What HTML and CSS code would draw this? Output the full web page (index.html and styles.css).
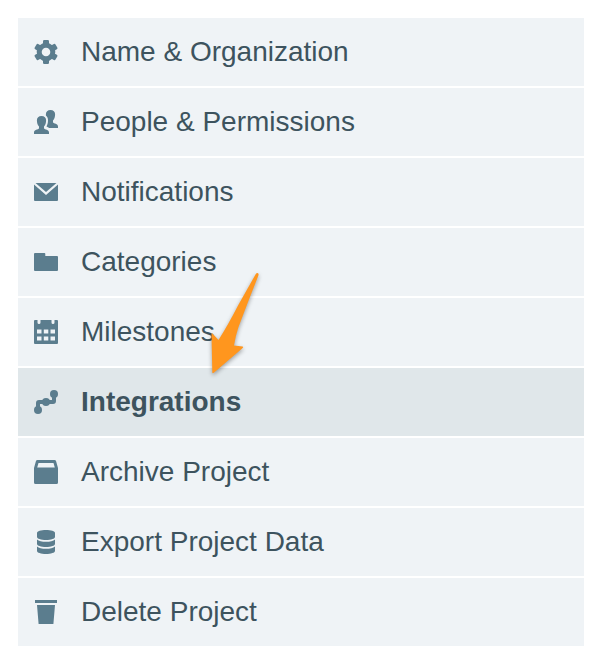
FILE: index.html
```html
<!DOCTYPE html>
<html lang="en">
<head>
    <meta charset="UTF-8">
    <meta name="viewport" content="width=device-width, initial-scale=1.0">
    <title>Project Settings</title>
    <link rel="stylesheet" href="styles.css">
</head>
<body>
    <nav class="settings-menu">
        <a href="#" class="menu-item">
            <svg class="icon" viewBox="0 0 24 24" aria-hidden="true">
                <circle class="ring" cx="12" cy="12" r="6.800"/>
                <rect x="9" y="0" width="6" height="5" rx="1.200"/>
                <rect x="9" y="0" width="6" height="5" rx="1.200" transform="rotate(60 12 12)"/>
                <rect x="9" y="0" width="6" height="5" rx="1.200" transform="rotate(120 12 12)"/>
                <rect x="9" y="0" width="6" height="5" rx="1.200" transform="rotate(180 12 12)"/>
                <rect x="9" y="0" width="6" height="5" rx="1.200" transform="rotate(240 12 12)"/>
                <rect x="9" y="0" width="6" height="5" rx="1.200" transform="rotate(300 12 12)"/>
            </svg>
            <span>Name &amp; Organization</span>
        </a>
        <a href="#" class="menu-item">
            <svg class="icon" viewBox="0 0 24 24" aria-hidden="true">
                <path d="M7.500 6c2.900 0 4.600 1.700 4.600 4.200 0 2.600-.6 4.800-2.100 6.200v2.100c.8 1 5 1.200 5 4V24H0v-1.500c0-2.800 4.200-3 5-4v-2.100c-1.500-1.400-2.100-3.600-2.100-6.200C2.900 7.700 4.600 6 7.500 6z"/>
                <path d="M16.500 0c2.900 0 4.600 1.700 4.600 4.200 0 2.600-.6 4.800-2.100 6.200v2.100c.8 1 5 1.200 5 4V18h-8.800c-.8-.8-1.600-1.200-2.700-1.600 1-1.800 1.500-3.900 1.500-6.200 0-2-.7-3.600-2.100-4.700V4.200C11.900 1.700 13.600 0 16.500 0z"/>
            </svg>
            <span>People &amp; Permissions</span>
        </a>
        <a href="#" class="menu-item">
            <svg class="icon" viewBox="0 0 24 24" aria-hidden="true">
                <path d="M1.500 3h21L12 12z"/>
                <path d="M0 4.500l12 10.500 12-10.500V20q0 1-1 1H1q-1 0-1-1z"/>
            </svg>
            <span>Notifications</span>
        </a>
        <a href="#" class="menu-item">
            <svg class="icon" viewBox="0 0 24 24" aria-hidden="true">
                <path d="M1 3h9.500q.8 0 .8 1v2H23q1 0 1 1v13q0 1-1 1H1q-1 0-1-1V4q0-1 1-1z"/>
            </svg>
            <span>Categories</span>
        </a>
        <a href="#" class="menu-item">
            <svg class="icon" viewBox="0 0 24 24" aria-hidden="true">
                <path fill-rule="evenodd" d="M1 0h2.500v2.500a1.500 1.500 0 0 0 3 0V0h11v2.500a1.500 1.500 0 0 0 3 0V0H23q1 0 1 1v22q0 1-1 1H1q-1 0-1-1V1q0-1 1-1zM3 9.500v4h4.500v-4zM9.800 9.500v4h4.500v-4zM16.500 9.500v4H21v-4zM3 16.500v4h4.500v-4zM9.800 16.500v4h4.500v-4zM16.500 16.500v4H21v-4z"/>
            </svg>
            <span>Milestones</span>
        </a>
        <a href="#" class="menu-item active" aria-current="page">
            <svg class="icon" viewBox="0 0 24 24" aria-hidden="true">
                <path class="wire" d="M4 20v-7q0-1 1-1h14q1 0 1-1V4"/>
                <circle cx="4" cy="20" r="4"/>
                <circle cx="12" cy="12" r="4"/>
                <circle cx="20" cy="4" r="4"/>
            </svg>
            <span>Integrations</span>
        </a>
        <a href="#" class="menu-item">
            <svg class="icon" viewBox="0 0 24 24" aria-hidden="true">
                <path fill-rule="evenodd" d="M3.500 0h17q1.300 0 1.600 1.200L24 8v14.500q0 1.500-1.500 1.500h-21Q0 24 0 22.500V8l1.900-6.800Q2.200 0 3.500 0zM4.500 3L3.200 7.500h17.600L19.500 3z"/>
            </svg>
            <span>Archive Project</span>
        </a>
        <a href="#" class="menu-item">
            <svg class="icon" viewBox="0 0 24 24" aria-hidden="true">
                <path d="M3 3c0-1.800 4-3 9-3s9 1.200 9 3v4c0 1.600-4 3-9 3s-9-1.400-9-3z"/>
                <path d="M3 9.500c1.700 1.600 5 2.300 9 2.300s7.300-.7 9-2.300V14c0 1.600-4 3-9 3s-9-1.400-9-3z"/>
                <path d="M3 16.500c1.700 1.600 5 2.300 9 2.300s7.300-.7 9-2.300V21c0 1.600-4 3-9 3s-9-1.400-9-3z"/>
            </svg>
            <span>Export Project Data</span>
        </a>
        <a href="#" class="menu-item">
            <svg class="icon" viewBox="0 0 24 24" aria-hidden="true">
                <path d="M1 0h22v3H1zM3 5h18l-1.600 19H4.600z"/>
            </svg>
            <span>Delete Project</span>
        </a>

        <svg class="pointer" viewBox="0 0 52 104" aria-hidden="true">
            <path d="M3.300 100.500L2.500 62q0-1.500 1-.5L9.500 68Q19 53 29.300 33L46.800 2q1-1.500 2.200-.8 1 .8.300 2.600L39 30 29.500 55Q26.500 64 25 73.500l8.500 1q1.500.4.2 1.600L4.800 100.800q-1.300.8-1.500-.3z"/>
        </svg>
    </nav>
</body>
</html>
```
FILE: styles.css
```css
* {
    margin: 0;
    padding: 0;
    box-sizing: border-box;
}

body {
    background: #fff;
    padding: 18px 16px 16px 18px;
    font-family: "Liberation Sans", Arial, sans-serif;
}

.settings-menu {
    position: relative;
    display: flex;
    flex-direction: column;
    gap: 2px;
}

.menu-item {
    display: flex;
    align-items: center;
    gap: 23px;
    padding: 18px 16px;
    background: #eff3f6;
    color: #3d535e;
    font-size: 28px;
    line-height: 32px;
    text-decoration: none;
}

.menu-item:hover,
.menu-item.active {
    background: #e0e7ea;
}

.menu-item.active {
    font-weight: bold;
}

.icon {
    flex: none;
    width: 24px;
    height: 24px;
    fill: #5b7d8e;
}

.ring {
    fill: none;
    stroke: #5b7d8e;
    stroke-width: 5px;
}

.wire {
    fill: none;
    stroke: #5b7d8e;
    stroke-width: 4px;
}

/* arrow laid over the menu, pointing at the active item */
.pointer {
    position: absolute;
    top: 254px;
    left: 191px;
    width: 52px;
    height: 104px;
    fill: #ff961e;
    filter: drop-shadow(0 2px 2px rgba(0, 0, 0, 0.35));
    pointer-events: none;
}
```
